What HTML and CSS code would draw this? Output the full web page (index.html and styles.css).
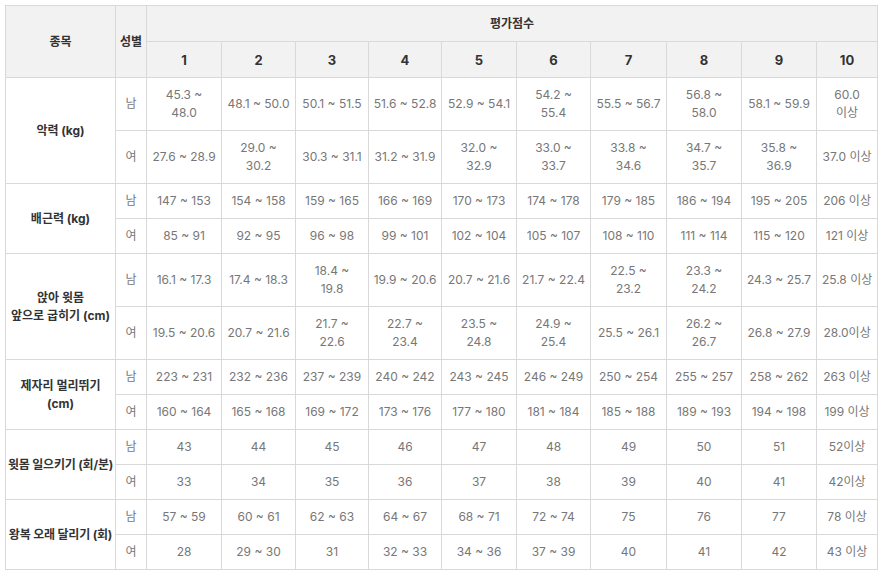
FILE: index.html
```html
<!DOCTYPE html>
<html lang="ko">
<head>
<meta charset="utf-8">
<link rel="stylesheet" href="styles.css">
</head>
<body>
<table class="score">
<colgroup>
<col class="c-item"><col class="c-sex">
<col class="c1"><col class="c2"><col class="c3"><col class="c4"><col class="c5"><col class="c6"><col class="c7"><col class="c8"><col class="c9"><col class="c10">
</colgroup>
<thead>
<tr class="h1"><th rowspan="2">종목</th><th rowspan="2">성별</th><th colspan="10">평가점수</th></tr>
<tr class="h2"><th>1</th><th>2</th><th>3</th><th>4</th><th>5</th><th>6</th><th>7</th><th>8</th><th>9</th><th>10</th></tr>
</thead>
<tbody>
<tr class="tall"><th rowspan="2" class="item">악력 (kg)</th><td>남</td><td>45.3 ~<br>48.0</td><td>48.1 ~ 50.0</td><td>50.1 ~ 51.5</td><td>51.6 ~ 52.8</td><td>52.9 ~ 54.1</td><td>54.2 ~<br>55.4</td><td>55.5 ~ 56.7</td><td>56.8 ~<br>58.0</td><td>58.1 ~ 59.9</td><td>60.0<br>이상</td></tr>
<tr class="tall"><td>여</td><td>27.6 ~ 28.9</td><td>29.0 ~<br>30.2</td><td>30.3 ~ 31.1</td><td>31.2 ~ 31.9</td><td>32.0 ~<br>32.9</td><td>33.0 ~<br>33.7</td><td>33.8 ~<br>34.6</td><td>34.7 ~<br>35.7</td><td>35.8 ~<br>36.9</td><td>37.0 이상</td></tr>
<tr><th rowspan="2" class="item">배근력 (kg)</th><td>남</td><td>147 ~ 153</td><td>154 ~ 158</td><td>159 ~ 165</td><td>166 ~ 169</td><td>170 ~ 173</td><td>174 ~ 178</td><td>179 ~ 185</td><td>186 ~ 194</td><td>195 ~ 205</td><td>206 이상</td></tr>
<tr><td>여</td><td>85 ~ 91</td><td>92 ~ 95</td><td>96 ~ 98</td><td>99 ~ 101</td><td>102 ~ 104</td><td>105 ~ 107</td><td>108 ~ 110</td><td>111 ~ 114</td><td>115 ~ 120</td><td>121 이상</td></tr>
<tr class="tall"><th rowspan="2" class="item">앉아 윗몸<br>앞으로 굽히기 (cm)</th><td>남</td><td>16.1 ~ 17.3</td><td>17.4 ~ 18.3</td><td>18.4 ~<br>19.8</td><td>19.9 ~ 20.6</td><td>20.7 ~ 21.6</td><td>21.7 ~ 22.4</td><td>22.5 ~<br>23.2</td><td>23.3 ~<br>24.2</td><td>24.3 ~ 25.7</td><td>25.8 이상</td></tr>
<tr class="tall"><td>여</td><td>19.5 ~ 20.6</td><td>20.7 ~ 21.6</td><td>21.7 ~<br>22.6</td><td>22.7 ~<br>23.4</td><td>23.5 ~<br>24.8</td><td>24.9 ~<br>25.4</td><td>25.5 ~ 26.1</td><td>26.2 ~<br>26.7</td><td>26.8 ~ 27.9</td><td>28.0이상</td></tr>
<tr><th rowspan="2" class="item">제자리 멀리뛰기<br>(cm)</th><td>남</td><td>223 ~ 231</td><td>232 ~ 236</td><td>237 ~ 239</td><td>240 ~ 242</td><td>243 ~ 245</td><td>246 ~ 249</td><td>250 ~ 254</td><td>255 ~ 257</td><td>258 ~ 262</td><td>263 이상</td></tr>
<tr><td>여</td><td>160 ~ 164</td><td>165 ~ 168</td><td>169 ~ 172</td><td>173 ~ 176</td><td>177 ~ 180</td><td>181 ~ 184</td><td>185 ~ 188</td><td>189 ~ 193</td><td>194 ~ 198</td><td>199 이상</td></tr>
<tr><th rowspan="2" class="item one">윗몸 일으키기 (회/분)</th><td>남</td><td>43</td><td>44</td><td>45</td><td>46</td><td>47</td><td>48</td><td>49</td><td>50</td><td>51</td><td>52이상</td></tr>
<tr><td>여</td><td>33</td><td>34</td><td>35</td><td>36</td><td>37</td><td>38</td><td>39</td><td>40</td><td>41</td><td>42이상</td></tr>
<tr><th rowspan="2" class="item one">왕복 오래 달리기 (회)</th><td>남</td><td>57 ~ 59</td><td>60 ~ 61</td><td>62 ~ 63</td><td>64 ~ 67</td><td>68 ~ 71</td><td>72 ~ 74</td><td>75</td><td>76</td><td>77</td><td>78 이상</td></tr>
<tr><td>여</td><td>28</td><td>29 ~ 30</td><td>31</td><td>32 ~ 33</td><td>34 ~ 36</td><td>37 ~ 39</td><td>40</td><td>41</td><td>42</td><td>43 이상</td></tr>
</tbody>
</table>
</body>
</html>
```

FILE: styles.css
```css
html, body {
  margin: 0;
  padding: 0;
  background: #fff;
}
body {
  padding: 5px 0 0 5px;
  font-family: Inter, "Noto Sans CJK KR", sans-serif;
}
.score {
  border-collapse: collapse;
  table-layout: fixed;
  width: 873px;
  border-top: 1px solid #a8a8a8;
  border-left: 1px solid #a8a8a8;
}
.c-item { width: 110px; }
.c-sex { width: 31px; }
.c1 { width: 75px; }
.c2 { width: 74px; }
.c3 { width: 73px; }
.c4 { width: 73px; }
.c5 { width: 75px; }
.c6 { width: 74px; }
.c7 { width: 76px; }
.c8 { width: 75px; }
.c9 { width: 75px; }
.c10 { width: 61px; }
.score th, .score td {
  border: 1px solid #d9d9d9;
  padding: 0 2px;
  text-align: center;
  vertical-align: middle;
  font-size: 12px;
  line-height: 18px;
}
.score thead th {
  background: #f2f2f2;
  color: #333;
  font-weight: 700;
  font-size: 12px;
}
.score .h1 { height: 36px; }
.score .h2 { height: 36px; }
.score .h2 th { font-size: 13px; }
.score tbody tr { height: 35px; }
.score tbody tr.tall { height: 53px; }
.score td {
  color: #777;
  font-weight: 400;
}
.score th.item {
  color: #333;
  font-weight: 700;
  background: #fff;
}
.score th.item.one {
  padding: 0;
  white-space: nowrap;
  letter-spacing: -0.2px;
}
```
